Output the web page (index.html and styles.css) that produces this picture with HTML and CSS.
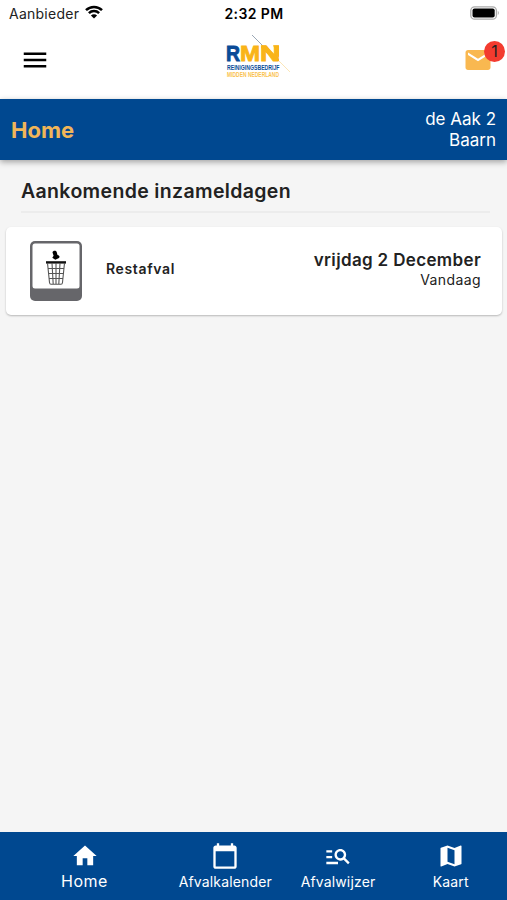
FILE: index.html
```
<!DOCTYPE html>
<html lang="nl">
<head>
    <meta charset="UTF-8">
    <meta name="viewport" content="width=device-width, initial-scale=1.0">
    <title>RMN Afval App</title>
    <link rel="stylesheet" href="styles.css">
</head>
<body>
    <div class="status-bar">
        <div class="carrier">
            <span>Aanbieder</span>
            <svg class="wifi" viewBox="0 0 18 14">
                <path d="M1 5.2a11.4 11.4 0 0 1 16 0M3.9 8.2a7.3 7.3 0 0 1 10.2 0" fill="none" stroke="#000" stroke-width="2.5"/>
                <path d="M9 13.6L5.9 10.5a4.4 4.4 0 0 1 6.2 0z"/>
            </svg>
        </div>
        <div class="time">2:32 PM</div>
        <div class="battery">
            <svg viewBox="0 0 30 14">
                <rect x="0.8" y="0.8" width="25.6" height="12.4" rx="3.8" fill="#fff" stroke="#aaa" stroke-width="1.3"/>
                <rect x="2.5" y="2.5" width="22.2" height="9" rx="2" fill="#000"/>
                <path d="M27.8 4.8q2 2.2 0 4.4z" fill="#aaa"/>
            </svg>
        </div>
    </div>

    <header class="top-bar">
        <svg class="menu-icon" viewBox="0 0 24 24"><path d="M3 18h18v-2H3v2zm0-5h18v-2H3v2zm0-7v2h18V6H3z"/></svg>
        <svg class="logo" viewBox="0 0 68 46">
            <path d="M27 1l11 11" stroke="#9aa7b5" stroke-width="1"/>
            <path d="M53 26l12 12" stroke="#fbe6b8" stroke-width="1"/>
            <text class="logo-name" x="1" y="27" textLength="14" lengthAdjust="spacingAndGlyphs" fill="#0a4b97" stroke="#0a4b97">R</text>
            <text class="logo-name" x="15" y="27" textLength="20" lengthAdjust="spacingAndGlyphs" fill="#f9b418" stroke="#f9b418">M</text>
            <text class="logo-name" x="35" y="27" textLength="20" lengthAdjust="spacingAndGlyphs" fill="#f9b418" stroke="#f9b418">N</text>
            <path d="M36 11.2h5L54 25v2h-4L36 14zM48 11.2h6v13z" fill="#f9b418"/>
            <text class="logo-sub" x="2" y="35.6" textLength="52.5" lengthAdjust="spacingAndGlyphs" fill="#0a4b97">REINIGINGSBEDRIJF</text>
            <text class="logo-sub" x="2" y="42.6" textLength="52" lengthAdjust="spacingAndGlyphs" fill="#fac24e">MIDDEN NEDERLAND</text>
        </svg>
        <div class="mail">
            <svg viewBox="0 0 24 24"><path d="M20 4H4c-1.1 0-1.99.9-1.99 2L2 18c0 1.1.9 2 2 2h16c1.1 0 2-.9 2-2V6c0-1.1-.9-2-2-2zm0 4l-8 5-8-5V6l8 5 8-5v2z"/></svg>
            <span class="badge">1</span>
        </div>
    </header>

    <div class="title-bar">
        <h1>Home</h1>
        <div class="address">de Aak 2<br>Baarn</div>
    </div>

    <main>
        <h2>Aankomende inzameldagen</h2>
        <div class="card">
            <svg class="bin" viewBox="0 0 52 60">
                <rect width="52" height="60" rx="5" fill="#66666a"/>
                <rect x="2.5" y="2.5" width="47" height="45" rx="2.5" fill="#fff"/>
                <path d="M22.5 11.5c0-1.800 3.600-2.400 4.200-.5l.8 3c2 .2 2.600 2 1.500 3l-3.700 1.800-3-2.100 1.300-2z" fill="#000"/>
                <path d="M16 21.400h20" stroke="#111" stroke-width="2.4"/>
                <path d="M17.500 22l2 19.500q.2 1.700 1.500 1.700h10q1.300 0 1.500-1.700l2-19.500M22 22l1.200 21M26 22v21M30 22l-1.200 21M18 27.500h16M18.500 32.500h15M19 37.500h14" fill="none" stroke="#555" stroke-width="1.100"/>
            </svg>
            <div class="type">Restafval</div>
            <div class="date">
                <strong>vrijdag 2 December</strong>
                <span>Vandaag</span>
            </div>
        </div>
    </main>

    <nav class="bottom-nav">
        <a class="nav-item active">
            <svg viewBox="0 0 24 24"><path d="M10 20v-6h4v6h5v-8h3L12 3 2 12h3v8z"/></svg>
            <span>Home</span>
        </a>
        <a class="nav-item">
            <svg viewBox="0 0 24 24"><path d="M20 3h-1V1h-2v2H7V1H5v2H4c-1.1 0-2 .9-2 2v16c0 1.1.9 2 2 2h16c1.1 0 2-.9 2-2V5c0-1.1-.9-2-2-2zm0 18H4V8h16v13z"/></svg>
            <span>Afvalkalender</span>
        </a>
        <a class="nav-item">
            <svg viewBox="0 0 24 24"><path d="M7 9H2V7h5v2zm0 3H2v2h5v-2zm13.59 7l-3.83-3.83c-.8.52-1.74.83-2.76.83-2.76 0-5-2.24-5-5s2.24-5 5-5 5 2.24 5 5c0 1.02-.31 1.96-.83 2.75L22 17.59 20.59 19zM17 11c0-1.65-1.35-3-3-3s-3 1.35-3 3 1.35 3 3 3 3-1.35 3-3zM2 19h10v-2H2v2z"/></svg>
            <span>Afvalwijzer</span>
        </a>
        <a class="nav-item">
            <svg viewBox="0 0 24 24"><path d="M20.5 3l-.16.03L15 5.1 9 3 3.36 4.9c-.21.07-.36.25-.36.48V20.5c0 .28.22.5.5.5l.16-.03L9 18.9l6 2.1 5.64-1.9c.21-.07.36-.25.36-.48V3.5c0-.28-.22-.5-.5-.5zM15 19l-6-2.11V5l6 2.11V19z"/></svg>
            <span>Kaart</span>
        </a>
    </nav>
</body>
</html>
```
FILE: styles.css
```
* {
    box-sizing: border-box;
}

body {
    margin: 0;
    height: 100vh;
    display: flex;
    flex-direction: column;
    font-family: Inter, "Liberation Sans", sans-serif;
    color: #222;
    background-color: #f5f5f5;
    overflow: hidden;
}

svg {
    display: block;
}

/* Status bar */
.status-bar {
    display: grid;
    grid-template-columns: 1fr auto 1fr;
    align-items: center;
    height: 28px;
    padding: 0 7px 2px 9px;
    background: #fff;
    font-size: 14px;
}

.carrier {
    display: flex;
    align-items: center;
    gap: 6px;
    letter-spacing: 0.25px;
}

.wifi {
    width: 18px;
    height: 14px;
    margin-top: -2px;
}

.time {
    margin-left: -1px;
    color: #000;
    font-weight: 600;
    letter-spacing: 0.4px;
}

.battery {
    justify-self: end;
}

.battery svg {
    width: 30px;
    height: 14px;
}

/* Top bar with logo */
.top-bar {
    display: grid;
    grid-template-columns: 1fr auto 1fr;
    align-items: center;
    height: 71px;
    padding: 0 14px 8px 20px;
    background: #fff;
}

.menu-icon {
    width: 30px;
    height: 30px;
}

.logo {
    width: 68px;
    height: 46px;
    margin: -6px -2px 0 2px;
    overflow: visible;
}

.logo-name {
    font-family: "Liberation Sans", sans-serif;
    font-size: 22px;
    font-weight: 700;
    stroke-width: 0.9px;
}

.logo-sub {
    font-family: "Liberation Sans", sans-serif;
    font-size: 6.5px;
    font-weight: 700;
}

.mail {
    position: relative;
    justify-self: end;
}

.mail svg {
    width: 30px;
    height: 30px;
    fill: #f9b850;
}

.badge {
    position: absolute;
    top: -4px;
    right: -12px;
    width: 21px;
    height: 21px;
    border-radius: 50%;
    background: #f33b2f;
    color: #222;
    font-size: 16px;
    line-height: 21px;
    text-align: center;
}

/* Blue title bar */
.title-bar {
    display: flex;
    align-items: center;
    justify-content: space-between;
    height: 61px;
    padding: 0 11px;
    background: #004890;
    color: #fff;
    box-shadow: 0 2px 6px rgba(0, 0, 0, 0.35);
}

h1 {
    margin: 0;
    font-size: 22px;
    font-weight: 700;
    color: #f0b659;
}

.address {
    font-size: 17px;
    line-height: 21px;
    text-align: right;
}

/* Content */
main {
    flex: 1;
    padding: 17px 5px 0 6px;
}

h2 {
    margin: 0 12px 14px 15px;
    padding-bottom: 5px;
    border-bottom: 2px solid #ececec;
    font-size: 19.5px;
    font-weight: 600;
    line-height: 29px;
    letter-spacing: 0.35px;
}

.card {
    display: flex;
    align-items: center;
    height: 88px;
    padding: 0 21px 0 24px;
    border-radius: 5px;
    background: #fff;
    box-shadow: 0 1px 2px rgba(0, 0, 0, 0.25);
}

.bin {
    width: 52px;
    height: 60px;
}

.type {
    margin: -6px 0 0 24px;
    font-size: 14px;
    font-weight: 600;
    letter-spacing: 0.65px;
}

.date {
    display: flex;
    flex-direction: column;
    align-items: flex-end;
    margin: -4px 0 0 auto;
    font-size: 14px;
    line-height: 19px;
    letter-spacing: 0.4px;
}

.date strong {
    font-size: 17px;
    font-weight: 600;
    line-height: 20px;
    letter-spacing: 0.35px;
}

/* Bottom navigation */
.bottom-nav {
    display: flex;
    height: 68px;
    background: #004890;
    color: #fff;
}

.nav-item {
    flex: 2;
    display: flex;
    flex-direction: column;
    align-items: center;
    padding-top: 10px;
    font-size: 14px;
    line-height: 23px;
    letter-spacing: 0.15px;
}

.nav-item.active {
    flex: 3;
    font-size: 16px;
    line-height: 22px;
    letter-spacing: 0.5px;
}

.nav-item svg {
    width: 28px;
    height: 28px;
    fill: #fff;
}
```
